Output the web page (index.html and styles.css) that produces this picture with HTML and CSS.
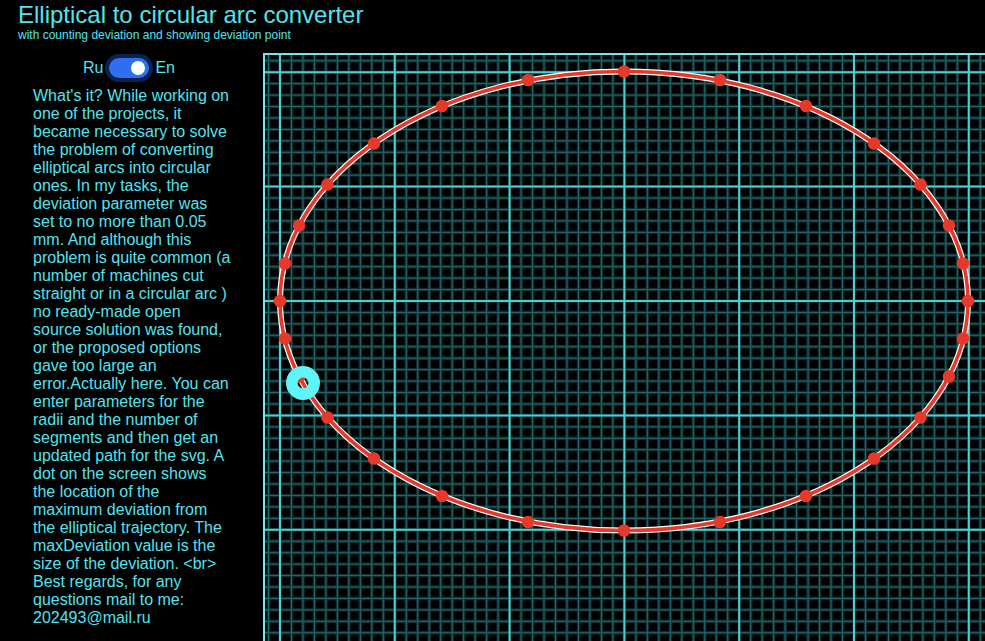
FILE: index.html
```html
<!DOCTYPE html>
<html lang="en">
<head>
<meta charset="utf-8">
<title>Elliptical to circular arc converter</title>
<link rel="stylesheet" href="styles.css">
</head>
<body>
<header class="header">
  <h1 class="title">Elliptical to circular arc converter</h1>
  <p class="subtitle">with counting deviation and showing deviation point</p>
</header>
<main class="main">
  <aside class="sidebar">
    <div class="lang">
      <span>Ru</span>
      <span class="switch"><span class="knob"></span></span>
      <span>En</span>
    </div>
    <p class="about">What's it? While working on one of the projects, it became necessary to solve the problem of converting elliptical arcs into circular ones. In my tasks, the deviation parameter was set to no more than 0.05 mm. And although this problem is quite common (a number of machines cut straight or in a circular arc ) no ready-made open source solution was found, or the proposed options gave too large an error.Actually here. You can enter parameters for the radii and the number of segments and then get an updated path for the svg. A dot on the screen shows the location of the maximum deviation from the elliptical trajectory. The maxDeviation value is the size of the deviation. &lt;br&gt; Best regards, for any questions mail to me: 202493@mail.ru</p>
  </aside>
  <div class="canvas">
    <svg class="plot" width="722" height="588" viewBox="0 0 722 588">
      <rect width="722" height="588" fill="#000"/>
      <g fill="none">
        <path class="minor-glow" d="M5.52 0V588M17 0V588M28.48 0V588M39.96 0V588M51.44 0V588M62.92 0V588M74.4 0V588M85.88 0V588M97.36 0V588M108.84 0V588M120.32 0V588M131.8 0V588M143.28 0V588M154.76 0V588M166.24 0V588M177.72 0V588M189.2 0V588M200.68 0V588M212.16 0V588M223.64 0V588M235.12 0V588M246.6 0V588M258.08 0V588M269.56 0V588M281.04 0V588M292.52 0V588M304 0V588M315.48 0V588M326.96 0V588M338.44 0V588M349.92 0V588M361.4 0V588M372.88 0V588M384.36 0V588M395.84 0V588M407.32 0V588M418.8 0V588M430.28 0V588M441.76 0V588M453.24 0V588M464.72 0V588M476.2 0V588M487.68 0V588M499.16 0V588M510.64 0V588M522.12 0V588M533.6 0V588M545.08 0V588M556.56 0V588M568.04 0V588M579.52 0V588M591 0V588M602.48 0V588M613.96 0V588M625.44 0V588M636.92 0V588M648.4 0V588M659.88 0V588M671.36 0V588M682.84 0V588M694.32 0V588M705.8 0V588M717.28 0V588M0 7.76H722M0 19.2H722M0 30.64H722M0 42.08H722M0 53.52H722M0 64.96H722M0 76.4H722M0 87.84H722M0 99.28H722M0 110.72H722M0 122.16H722M0 133.6H722M0 145.04H722M0 156.48H722M0 167.92H722M0 179.36H722M0 190.8H722M0 202.24H722M0 213.68H722M0 225.12H722M0 236.56H722M0 248H722M0 259.44H722M0 270.88H722M0 282.32H722M0 293.76H722M0 305.2H722M0 316.64H722M0 328.08H722M0 339.52H722M0 350.96H722M0 362.4H722M0 373.84H722M0 385.28H722M0 396.72H722M0 408.16H722M0 419.6H722M0 431.04H722M0 442.48H722M0 453.92H722M0 465.36H722M0 476.8H722M0 488.24H722M0 499.68H722M0 511.12H722M0 522.56H722M0 534H722M0 545.44H722M0 556.88H722M0 568.32H722M0 579.76H722"/>
        <path class="minor-core" d="M5.52 0V588M17 0V588M28.48 0V588M39.96 0V588M51.44 0V588M62.92 0V588M74.4 0V588M85.88 0V588M97.36 0V588M108.84 0V588M120.32 0V588M131.8 0V588M143.28 0V588M154.76 0V588M166.24 0V588M177.72 0V588M189.2 0V588M200.68 0V588M212.16 0V588M223.64 0V588M235.12 0V588M246.6 0V588M258.08 0V588M269.56 0V588M281.04 0V588M292.52 0V588M304 0V588M315.48 0V588M326.96 0V588M338.44 0V588M349.92 0V588M361.4 0V588M372.88 0V588M384.36 0V588M395.84 0V588M407.32 0V588M418.8 0V588M430.28 0V588M441.76 0V588M453.24 0V588M464.72 0V588M476.2 0V588M487.68 0V588M499.16 0V588M510.64 0V588M522.12 0V588M533.6 0V588M545.08 0V588M556.56 0V588M568.04 0V588M579.52 0V588M591 0V588M602.48 0V588M613.96 0V588M625.44 0V588M636.92 0V588M648.4 0V588M659.88 0V588M671.36 0V588M682.84 0V588M694.32 0V588M705.8 0V588M717.28 0V588M0 7.76H722M0 19.2H722M0 30.64H722M0 42.08H722M0 53.52H722M0 64.96H722M0 76.4H722M0 87.84H722M0 99.28H722M0 110.72H722M0 122.16H722M0 133.6H722M0 145.04H722M0 156.48H722M0 167.92H722M0 179.36H722M0 190.8H722M0 202.24H722M0 213.68H722M0 225.12H722M0 236.56H722M0 248H722M0 259.44H722M0 270.88H722M0 282.32H722M0 293.76H722M0 305.2H722M0 316.64H722M0 328.08H722M0 339.52H722M0 350.96H722M0 362.4H722M0 373.84H722M0 385.28H722M0 396.72H722M0 408.16H722M0 419.6H722M0 431.04H722M0 442.48H722M0 453.92H722M0 465.36H722M0 476.8H722M0 488.24H722M0 499.68H722M0 511.12H722M0 522.56H722M0 534H722M0 545.44H722M0 556.88H722M0 568.32H722M0 579.76H722"/>
        <path class="major" d="M17 0V588M131.8 0V588M246.6 0V588M361.4 0V588M476.2 0V588M591 0V588M705.8 0V588M0 19.2H722M0 133.6H722M0 248H722M0 362.4H722M0 476.8H722"/>
        <path class="frame" d="M1 588V1H722"/>
      </g>
      <g transform="translate(361 248)">
        <ellipse cx="0" cy="0" rx="344" ry="229.5" fill="none" stroke="#ffffff" stroke-width="6"/>
        <ellipse cx="0" cy="0" rx="344" ry="229.5" fill="none" stroke="#e5392b" stroke-width="3.6"/>
        <g fill="#e5392b">
          <circle cx="0" cy="-229.5" r="6.3"/>
          <circle cx="96" cy="-221" r="6.3"/>
          <circle cx="182" cy="-195" r="6.3"/>
          <circle cx="250" cy="-157.5" r="6.3"/>
          <circle cx="296.5" cy="-116.5" r="6.3"/>
          <circle cx="325" cy="-75.5" r="6.3"/>
          <circle cx="339" cy="-37.5" r="6.3"/>
          <circle cx="344" cy="0" r="6.3"/>
          <circle cx="339" cy="37.5" r="6.3"/>
          <circle cx="325" cy="75.5" r="6.3"/>
          <circle cx="296.5" cy="116.5" r="6.3"/>
          <circle cx="250" cy="157.5" r="6.3"/>
          <circle cx="182" cy="195" r="6.3"/>
          <circle cx="96" cy="221" r="6.3"/>
          <circle cx="0" cy="229.5" r="6.3"/>
          <circle cx="-96" cy="221" r="6.3"/>
          <circle cx="-182" cy="195" r="6.3"/>
          <circle cx="-250" cy="157.5" r="6.3"/>
          <circle cx="-296.5" cy="116.5" r="6.3"/>
          <circle cx="-325" cy="75.5" r="6.3"/>
          <circle cx="-339" cy="37.5" r="6.3"/>
          <circle cx="-344" cy="0" r="6.3"/>
          <circle cx="-339" cy="-37.5" r="6.3"/>
          <circle cx="-325" cy="-75.5" r="6.3"/>
          <circle cx="-296.5" cy="-116.5" r="6.3"/>
          <circle cx="-250" cy="-157.5" r="6.3"/>
          <circle cx="-182" cy="-195" r="6.3"/>
          <circle cx="-96" cy="-221" r="6.3"/>
        </g>
      </g>
      <circle cx="40" cy="330" r="11.2" fill="none" stroke="#5ff4f6" stroke-width="11.6"/>
    </svg>
  </div>
</main>
</body>
</html>
```
FILE: styles.css
```css
html, body {
  margin: 0;
  padding: 0;
  background: #000;
  color: #52e3ef;
  font-family: "Liberation Sans", Arial, sans-serif;
  overflow: hidden;
}

.header {
  padding: 0 0 0 18px;
  height: 53px;
}

.title {
  margin: 0;
  font-size: 24px;
  font-weight: normal;
  line-height: 29px;
}

.subtitle {
  margin: 0;
  font-size: 12px;
  line-height: 13px;
}

.main {
  display: flex;
  align-items: flex-start;
}

.sidebar {
  width: 263px;
  flex: none;
  box-sizing: border-box;
  padding: 4px 0 0 33px;
}

.lang {
  width: 200px;
  display: flex;
  align-items: center;
  justify-content: center;
  gap: 6px;
  font-size: 16px;
  height: 22px;
  padding-right: 8px;
  box-sizing: border-box;
}

.switch {
  position: relative;
  display: inline-block;
  width: 40px;
  height: 20px;
  border-radius: 10px;
  background: #2f6fee;
  box-shadow: 0 0 0 4px #0b2150;
}

.knob {
  position: absolute;
  right: 4px;
  top: 3px;
  width: 14px;
  height: 14px;
  border-radius: 50%;
  background: #fff;
}

.about {
  width: 200px;
  margin: 8px 0 0 0;
  font-size: 16px;
  line-height: 18px;
}

.canvas {
  flex: none;
  width: 722px;
  height: 588px;
}

.plot {
  display: block;
}

.minor-glow {
  stroke: #0e2c2e;
  stroke-width: 3.4;
}

.minor-core {
  stroke: #236a6c;
  stroke-width: 1;
}

.major {
  stroke: #4ccfd2;
  stroke-width: 2;
}

.frame {
  stroke: #74e8eb;
  stroke-width: 2;
}
```
